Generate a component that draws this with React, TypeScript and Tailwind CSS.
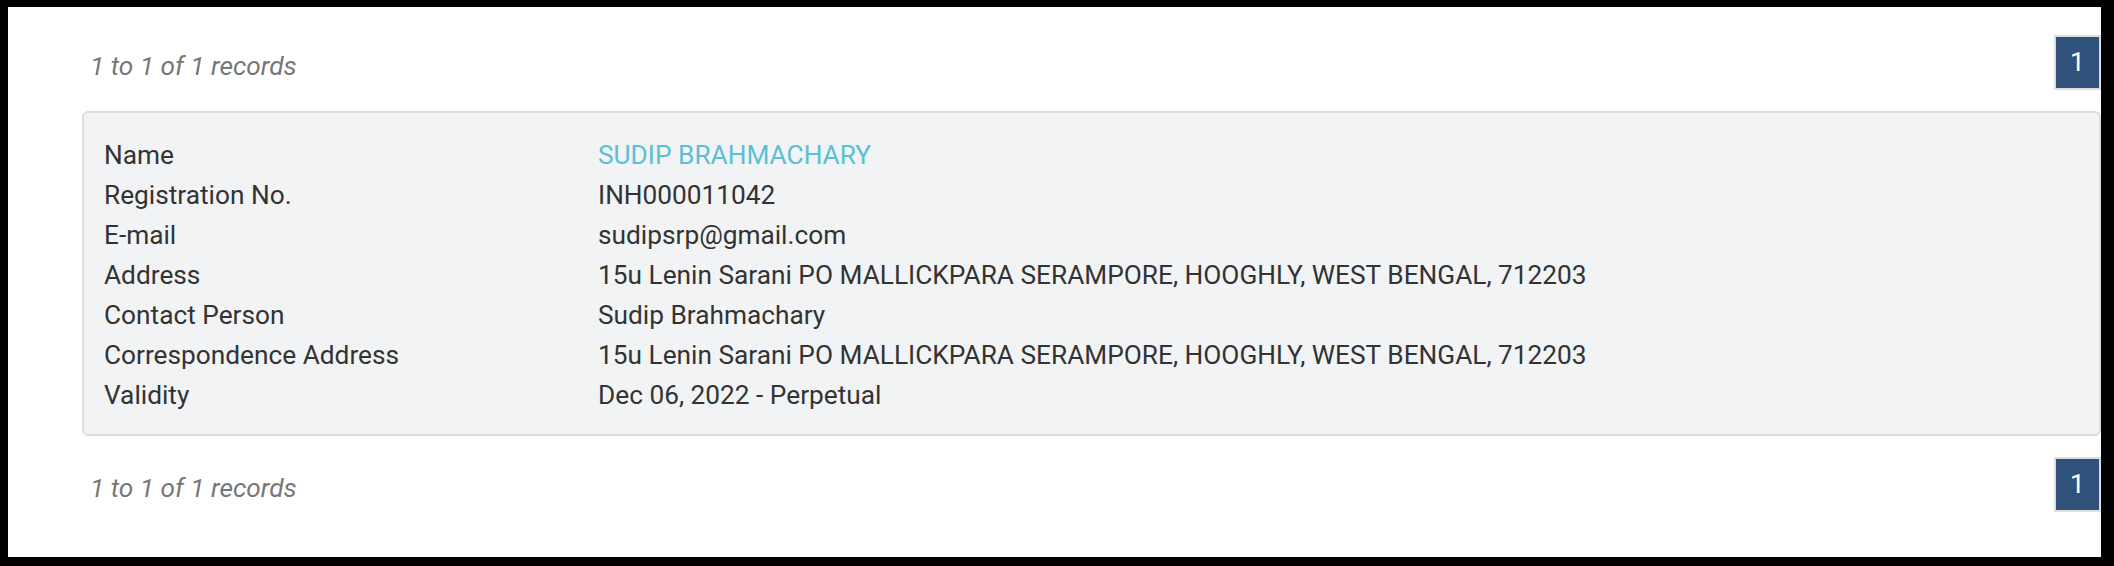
import React from 'react';

interface Row {
  label: string;
  value: string;
  highlight?: boolean;
}

const rows: Row[] = [
  { label: 'Name', value: 'SUDIP BRAHMACHARY', highlight: true },
  { label: 'Registration No.', value: 'INH000011042' },
  { label: 'E-mail', value: 'sudipsrp@gmail.com' },
  { label: 'Address', value: '15u Lenin Sarani PO MALLICKPARA SERAMPORE, HOOGHLY, WEST BENGAL, 712203' },
  { label: 'Contact Person', value: 'Sudip Brahmachary' },
  { label: 'Correspondence Address', value: '15u Lenin Sarani PO MALLICKPARA SERAMPORE, HOOGHLY, WEST BENGAL, 712203' },
  { label: 'Validity', value: 'Dec 06, 2022 - Perpetual' },
];

const Pager: React.FC = () => (
  <div className="flex items-start justify-between">
    <div className="mt-[11px] pl-[8px] italic leading-[40px] text-[#777]">1 to 1 of 1 records</div>
    <button className="flex h-[55px] w-[47px] items-center justify-center border-2 border-[#dddddd] bg-[#30527a] leading-none text-white">
      1
    </button>
  </div>
);

const App: React.FC = () => {
  return (
    <div className="h-[566px] w-[2114px] bg-black pt-[7px] pr-[13px] pb-[9px] pl-[8px]">
      <div className="h-full bg-white pt-[28px] pl-[74px] font-['Roboto',sans-serif] text-[26.25px] text-[#333]">
        <Pager />

        <div className="mt-[21px] mb-[21px] rounded-[6px] border-2 border-[#dddddd] bg-[#f2f3f5] pt-[22px] pb-[19px] pl-[20px]">
          {rows.map((row) => (
            <div key={row.label} className="grid grid-cols-[494px_1fr] leading-[40px]">
              <div>{row.label}</div>
              <div className={row.highlight ? 'text-[#5bc0d4]' : ''}>{row.value}</div>
            </div>
          ))}
        </div>

        <Pager />
      </div>
    </div>
  );
};

export default App;
